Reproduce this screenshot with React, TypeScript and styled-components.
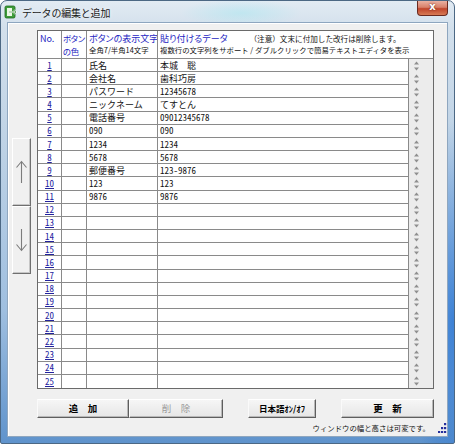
import React from "react";
import styled, { createGlobalStyle } from "styled-components";

const GlobalStyle = createGlobalStyle`
  html, body {
    margin: 0;
    padding: 0;
    background: #ffffff;
  }
  body {
    font-family: "Noto Sans CJK JP", "Noto Sans", sans-serif;
  }
`;

type Entry = { label: string; data: string };

const entries: Entry[] = [
  { label: "氏名", data: "本城  聡" },
  { label: "会社名", data: "歯科巧房" },
  { label: "パスワード", data: "12345678" },
  { label: "ニックネーム", data: "てすとん" },
  { label: "電話番号", data: "09012345678" },
  { label: "090", data: "090" },
  { label: "1234", data: "1234" },
  { label: "5678", data: "5678" },
  { label: "郵便番号", data: "123-9876" },
  { label: "123", data: "123" },
  { label: "9876", data: "9876" },
];

const ROW_COUNT = 25;
const LINE = "#8a8a8a";
const HEAD_BLUE = "#2626c2";

const AppIcon = () => (
  <svg width="14" height="14" viewBox="0 0 14 14">
    <rect x="1" y="1" width="10" height="12" rx="1.5" fill="#3e9c3a" stroke="#1e6a1e" strokeWidth="0.8" />
    <rect x="3" y="3" width="5" height="8" fill="#eaf7e4" />
    <path d="M5 7h7M10 5l2 2-2 2" stroke="#ffffff" strokeWidth="1.4" fill="none" />
    <path d="M5 7h7M10 5l2 2-2 2" stroke="#2d7f2a" strokeWidth="0.6" fill="none" />
  </svg>
);

const MoveArrow = ({ down }: { down?: boolean }) => (
  <svg width="13" height="24" viewBox="0 0 13 24">
    {down ? (
      <path d="M6.5 1V22.5M1.5 16.5L6.5 22.5L11.5 16.5" stroke="#7c7c7c" strokeWidth="1.1" fill="none" />
    ) : (
      <path d="M6.5 23V1.5M1.5 7.5L6.5 1.5L11.5 7.5" stroke="#7c7c7c" strokeWidth="1.1" fill="none" />
    )}
  </svg>
);

// tiny per-row scroll arrows next to each data cell
const SpinArrows = () => (
  <svg width="7" height="12" viewBox="0 0 7 12">
    <path d="M1 4.5L3.5 1.5L6 4.5Z" fill="#8e8e8e" />
    <path d="M1 7.5L3.5 10.5L6 7.5Z" fill="#8e8e8e" />
  </svg>
);

const GripDots = () => (
  <svg width="9" height="10" viewBox="0 0 9 10">
    {[
      [6, 0],
      [6, 4],
      [3, 4],
      [6, 8],
      [3, 8],
      [0, 8],
    ].map(([x, y]) => (
      <rect key={`${x}-${y}`} x={x} y={y} width="2.2" height="2.2" fill="#25309c" />
    ))}
  </svg>
);

const App = () => {
  const rows = Array.from({ length: ROW_COUNT }, (_, i) => entries[i] ?? { label: "", data: "" });

  return (
    <>
      <GlobalStyle />
      <Window>
        <TitleBar>
          <AppIcon />
          <Title>データの編集と追加</Title>
          <CloseButton>x</CloseButton>
        </TitleBar>
        <Client>
          <Main>
            <Side>
              <MoveButton>
                <MoveArrow />
              </MoveButton>
              <MoveButton>
                <MoveArrow down />
              </MoveButton>
            </Side>
            <Table>
              <HeadCell>
                <HeadText>No.</HeadText>
              </HeadCell>
              <HeadCell $tight>
                <HeadText $narrow>ボタン</HeadText>
                <HeadText $narrow>の色</HeadText>
              </HeadCell>
              <HeadCell>
                <HeadText>ボタンの表示文字</HeadText>
                <SmallText>全角7/半角14文字</SmallText>
              </HeadCell>
              <HeadCell $span={2} $last>
                <HeadLine>
                  <HeadText>貼り付けるデータ</HeadText>
                  <NoteText>（注意）文末に付加した改行は削除します。</NoteText>
                </HeadLine>
                <SmallText>複数行の文字列をサポート / ダブルクリックで簡易テキストエディタを表示</SmallText>
              </HeadCell>

              {rows.map((row, i) => {
                const bottom = i === ROW_COUNT - 1;
                return (
                  <React.Fragment key={i}>
                    <Cell $bottom={bottom} $center>
                      <RowNo>{i + 1}</RowNo>
                    </Cell>
                    <Cell $bottom={bottom} />
                    <Cell $bottom={bottom}>{row.label}</Cell>
                    <Cell $bottom={bottom}>{row.data}</Cell>
                    <SpinCell>
                      <SpinArrows />
                    </SpinCell>
                  </React.Fragment>
                );
              })}
            </Table>
          </Main>

          <ButtonBar>
            <PushButton $w={92}>追　加</PushButton>
            <PushButton $w={94} disabled>
              削　除
            </PushButton>
            <PushButton $w={68} $gap={25} $small>
              日本語ｵﾝ/ｵﾌ
            </PushButton>
            <PushButton $w={93} $gap={25}>
              更　新
            </PushButton>
          </ButtonBar>

          <StatusBar>
            <StatusText>ウィンドウの幅と高さは可変です。</StatusText>
            <GripDots />
          </StatusBar>
        </Client>
      </Window>
    </>
  );
};

export default App;

const Window = styled.div`
  width: 455px;
  height: 444px;
  box-sizing: border-box;
  display: flex;
  flex-direction: column;
  padding: 0 6px 6px 6px;
  border: 1px solid #4c6884;
  border-radius: 7px 7px 2px 2px;
  background:
    radial-gradient(ellipse 60px 14px at 240px 12px, rgba(160, 230, 240, 0.45), transparent),
    radial-gradient(ellipse 40px 200px at 452px 320px, rgba(30, 110, 210, 0.75), transparent),
    linear-gradient(180deg, #e2ebf3 0%, #d3e0ec 6%, #bcd1e5 35%, #9fbfe0 70%, #5f93cc 100%);
  overflow: hidden;
`;

const TitleBar = styled.div`
  height: 21px;
  display: flex;
  align-items: center;
  gap: 4px;
  margin: 0 -6px;
  padding: 0 6px 0 3px;
`;

const Title = styled.span`
  font-size: 10px;
  color: #1a1a1a;
  letter-spacing: -0.2px;
  padding-top: 2px;
  text-shadow: 0 0 4px rgba(255, 255, 255, 0.9);
`;

const CloseButton = styled.div`
  margin-left: auto;
  align-self: flex-start;
  width: 31px;
  height: 15px;
  box-sizing: border-box;
  display: flex;
  align-items: center;
  justify-content: center;
  border: 1px solid #6a2a20;
  border-top: none;
  border-radius: 0 0 4px 4px;
  background: linear-gradient(180deg, #eab1a2 0%, #d8806a 45%, #c0452c 55%, #d77b55 100%);
  color: #ffffff;
  font: bold 10px "DejaVu Sans", sans-serif;
  line-height: 1;
  padding-bottom: 2px;
  text-shadow: 0 0 2px #5a1a10;
`;

const Client = styled.div`
  flex: 1;
  display: flex;
  flex-direction: column;
  background: #f0f0f0;
  border: 1px solid #8ea6bf;
  box-shadow: inset 1px 1px 0 #ffffff;
  padding: 0 0 2px 0;
`;

const Main = styled.div`
  display: flex;
  gap: 6px;
  padding: 7px 0 0 4px;
`;

const Side = styled.div`
  width: 19px;
  padding-top: 108px;
  display: flex;
  flex-direction: column;
`;

const MoveButton = styled.div`
  height: 68px;
  box-sizing: border-box;
  display: flex;
  align-items: center;
  justify-content: center;
  background: #f0f0f0;
  border: 1px solid;
  border-color: #ffffff #6f6f6f #6f6f6f #ffffff;
  box-shadow: inset -1px -1px 0 #c6c6c6;
`;

const Table = styled.div`
  width: 397px;
  height: 359px;
  box-sizing: border-box;
  border: 1px solid #6a6a6a;
  background: #ffffff;
  display: grid;
  grid-template-columns: 24px 25px 71px 251px 24px;
  grid-template-rows: 28px repeat(${ROW_COUNT}, 1fr);
`;

const HeadCell = styled.div<{ $span?: number; $last?: boolean; $tight?: boolean }>`
  grid-column: span ${(p) => p.$span ?? 1};
  box-sizing: border-box;
  border-right: ${(p) => (p.$last ? "none" : `1px solid ${LINE}`)};
  border-bottom: 1px solid ${LINE};
  padding: ${(p) => (p.$tight ? "1px 0 0 1px" : "2px 0 0 2px")};
  display: flex;
  flex-direction: column;
  overflow: hidden;
  white-space: nowrap;
  letter-spacing: ${(p) => (p.$tight ? "-0.4px" : "0")};
  font-feature-settings: "palt";
`;

const HeadLine = styled.div`
  display: flex;
  align-items: baseline;
  gap: 22px;
`;

const HeadText = styled.span<{ $narrow?: boolean }>`
  font-size: ${(p) => (p.$narrow ? "8.4px" : "9px")};
  line-height: ${(p) => (p.$narrow ? "12.5px" : "11px")};
  color: ${HEAD_BLUE};
`;

const SmallText = styled.span`
  font-size: 7.4px;
  line-height: 12px;
  color: #111111;
  font-feature-settings: normal;
`;

const NoteText = styled.span`
  font-size: 7.6px;
  line-height: 11px;
  color: #111111;
  font-feature-settings: normal;
`;

const Cell = styled.div<{ $bottom?: boolean; $center?: boolean }>`
  box-sizing: border-box;
  border-right: 1px solid ${LINE};
  border-bottom: ${(p) => (p.$bottom ? "none" : `1px solid ${LINE}`)};
  display: flex;
  align-items: center;
  justify-content: ${(p) => (p.$center ? "center" : "flex-start")};
  padding-left: ${(p) => (p.$center ? "0" : "2px")};
  font-size: 9px;
  line-height: 1;
  color: #111111;
  white-space: pre;
  overflow: hidden;
  font-feature-settings: "hwid";
`;

const RowNo = styled.span`
  color: #23239e;
  text-decoration: underline;
  font-size: 9px;
`;

const SpinCell = styled.div`
  background: #ececec;
  display: flex;
  align-items: center;
  padding-left: 4px;
`;

const ButtonBar = styled.div`
  display: flex;
  margin-top: 10px;
  padding-left: 29px;
`;

const PushButton = styled.button<{ $w: number; $gap?: number; $small?: boolean }>`
  width: ${(p) => p.$w}px;
  height: 19px;
  margin: 0 0 0 ${(p) => p.$gap ?? 0}px;
  padding: 0;
  box-sizing: border-box;
  border: 1px solid;
  border-color: #ffffff #5e5e5e #5e5e5e #fafafa;
  box-shadow: inset -1px -1px 0 #b8b8b8;
  background: linear-gradient(180deg, #f6f6f6, #e6e6e6);
  font-family: "Noto Sans CJK JP", sans-serif;
  font-size: ${(p) => (p.$small ? "8.5px" : "9.5px")};
  font-weight: bold;
  color: #000000;
  line-height: 1;

  &:disabled {
    color: #9a9a9a;
    font-weight: normal;
  }
`;

const StatusBar = styled.div`
  height: 13px;
  margin-top: 3px;
  display: flex;
  align-items: center;
  justify-content: flex-end;
  gap: 8px;
`;

const StatusText = styled.span`
  font-size: 7.4px;
  color: #111111;
`;
